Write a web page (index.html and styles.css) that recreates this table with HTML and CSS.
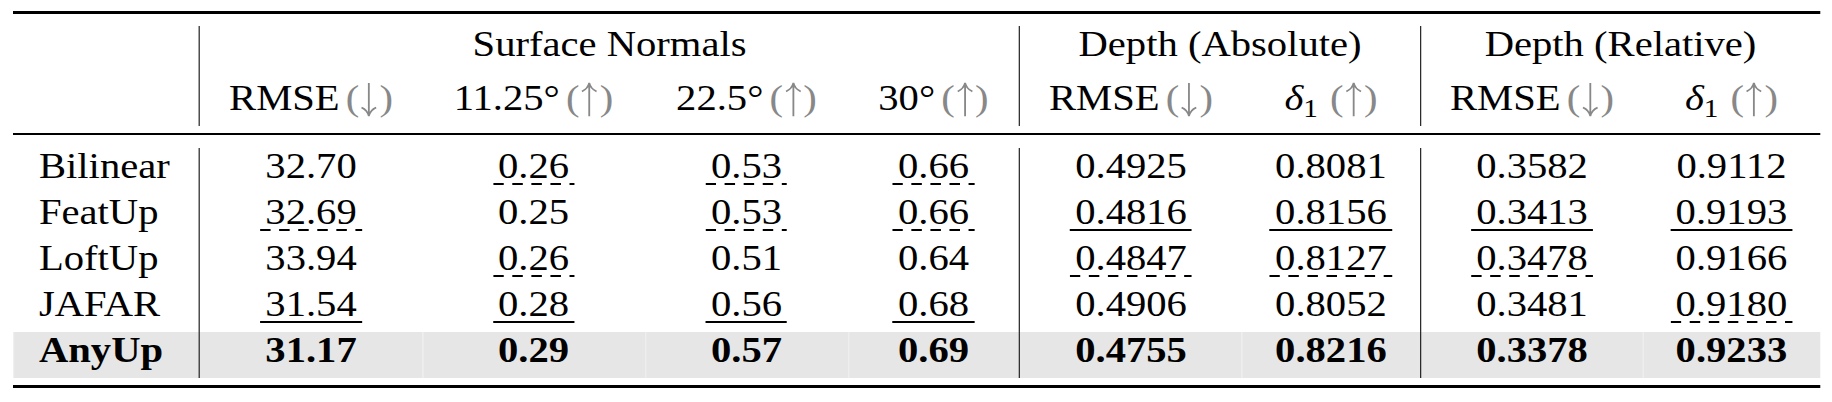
FILE: index.html
```html
<!DOCTYPE html>
<html lang="en">
<head>
    <meta charset="UTF-8">
    <meta name="viewport" content="width=device-width, initial-scale=1.0">
    <title>Upsampler comparison</title>
    <link rel="stylesheet" href="styles.css">
</head>
<body>
    <table class="results">
        <colgroup>
            <col class="c-method">
            <col class="c-wide">
            <col class="c-wide">
            <col class="c-225">
            <col class="c-30">
            <col class="c-wide">
            <col class="c-delta-a">
            <col class="c-wide">
            <col class="c-delta-r">
        </colgroup>
        <thead>
            <tr class="gap gap-top"><td colspan="9"></td></tr>
            <tr class="group">
                <td rowspan="2"></td>
                <td colspan="4" class="vl">Surface Normals</td>
                <td colspan="2" class="vl">Depth (Absolute)</td>
                <td colspan="2" class="vl">Depth (Relative)</td>
            </tr>
            <tr class="metric">
                <td class="vl">RMSE<span class="dir">(<svg class="arr" viewBox="0 0 10 20"><path d="M5 0.5V19.2M1.4 14.6Q4.3 16.1 5 19.5Q5.7 16.1 8.6 14.6"/></svg>)</span></td>
                <td>11.25°<span class="dir">(<svg class="arr" viewBox="0 0 10 20"><path d="M5 19.5V0.8M1.4 5.4Q4.3 3.9 5 0.5Q5.7 3.9 8.6 5.4"/></svg>)</span></td>
                <td>22.5°<span class="dir">(<svg class="arr" viewBox="0 0 10 20"><path d="M5 19.5V0.8M1.4 5.4Q4.3 3.9 5 0.5Q5.7 3.9 8.6 5.4"/></svg>)</span></td>
                <td>30°<span class="dir">(<svg class="arr" viewBox="0 0 10 20"><path d="M5 19.5V0.8M1.4 5.4Q4.3 3.9 5 0.5Q5.7 3.9 8.6 5.4"/></svg>)</span></td>
                <td class="vl">RMSE<span class="dir">(<svg class="arr" viewBox="0 0 10 20"><path d="M5 0.5V19.2M1.4 14.6Q4.3 16.1 5 19.5Q5.7 16.1 8.6 14.6"/></svg>)</span></td>
                <td><i>δ</i><sub>1</sub><span class="dir wide">(<svg class="arr" viewBox="0 0 10 20"><path d="M5 19.5V0.8M1.4 5.4Q4.3 3.9 5 0.5Q5.7 3.9 8.6 5.4"/></svg>)</span></td>
                <td class="vl">RMSE<span class="dir">(<svg class="arr" viewBox="0 0 10 20"><path d="M5 0.5V19.2M1.4 14.6Q4.3 16.1 5 19.5Q5.7 16.1 8.6 14.6"/></svg>)</span></td>
                <td><i>δ</i><sub>1</sub><span class="dir wide">(<svg class="arr" viewBox="0 0 10 20"><path d="M5 19.5V0.8M1.4 5.4Q4.3 3.9 5 0.5Q5.7 3.9 8.6 5.4"/></svg>)</span></td>
            </tr>
            <tr class="gap gap-mid"><td colspan="9"></td></tr>
        </thead>
        <tbody>
            <tr class="gap gap-body"><td colspan="9"></td></tr>
            <tr>
                <td class="name">Bilinear</td>
                <td class="vl">32.70</td>
                <td><span class="u3">0.26</span></td>
                <td><span class="u3">0.53</span></td>
                <td><span class="u3">0.66</span></td>
                <td class="vl">0.4925</td>
                <td>0.8081</td>
                <td class="vl">0.3582</td>
                <td>0.9112</td>
            </tr>
            <tr>
                <td class="name">FeatUp</td>
                <td class="vl"><span class="u3">32.69</span></td>
                <td>0.25</td>
                <td><span class="u3">0.53</span></td>
                <td><span class="u3">0.66</span></td>
                <td class="vl"><span class="u2">0.4816</span></td>
                <td><span class="u2">0.8156</span></td>
                <td class="vl"><span class="u2">0.3413</span></td>
                <td><span class="u2">0.9193</span></td>
            </tr>
            <tr>
                <td class="name">LoftUp</td>
                <td class="vl">33.94</td>
                <td><span class="u3">0.26</span></td>
                <td>0.51</td>
                <td>0.64</td>
                <td class="vl"><span class="u3">0.4847</span></td>
                <td><span class="u3">0.8127</span></td>
                <td class="vl"><span class="u3">0.3478</span></td>
                <td>0.9166</td>
            </tr>
            <tr>
                <td class="name">JAFAR</td>
                <td class="vl"><span class="u2">31.54</span></td>
                <td><span class="u2">0.28</span></td>
                <td><span class="u2">0.56</span></td>
                <td><span class="u2">0.68</span></td>
                <td class="vl">0.4906</td>
                <td>0.8052</td>
                <td class="vl">0.3481</td>
                <td><span class="u3">0.9180</span></td>
            </tr>
            <tr class="best">
                <td class="name">AnyUp</td>
                <td class="vl">31.17</td>
                <td>0.29</td>
                <td>0.57</td>
                <td>0.69</td>
                <td class="vl">0.4755</td>
                <td>0.8216</td>
                <td class="vl">0.3378</td>
                <td>0.9233</td>
            </tr>
            <tr class="gap gap-end"><td colspan="9"></td></tr>
        </tbody>
    </table>
</body>
</html>
```

FILE: styles.css
```css
body {
    margin: 0;
    padding: 11px 0 0 13px;
    background: #fff;
    color: #000;
    font-family: "Liberation Serif", Tinos, "Nimbus Roman", "FreeSerif", "DejaVu Serif", serif;
    font-size: 35px;
}

/* the source render is a bit wider than the font, so stretch the whole table */
.results {
    width: 1557.75px;
    table-layout: fixed;
    border-collapse: separate;
    border-spacing: 0;
    border-top: 3px solid #000;
    font-family: "Liberation Serif", Tinos, "Nimbus Roman", "FreeSerif", "DejaVu Serif", serif;
    transform: scaleX(1.16);
    transform-origin: 0 0;
}
.c-method { width: 160.34px; }
.c-wide { width: 192.24px; }
.c-225 { width: 175px; }
.c-30 { width: 147.41px; }
.c-delta-a { width: 153.45px; }
.c-delta-r { width: 152.59px; }

.results td {
    padding: 0 0 8px;
    line-height: 38px;
    text-align: center;
    white-space: nowrap;
    vertical-align: top;
}
.results .metric td {
    padding-top: 8px;
}
.results td.name {
    text-align: left;
    padding-left: 22.4px;
}
.results td.vl {
    border-left: 1px solid #1a1a1a;
}

/* booktabs style rules */
.results .gap td {
    padding: 0;
    line-height: 0;
    font-size: 0;
}
.results .gap-top td { padding-top: 12px; }
.results .gap-mid td {
    padding-top: 7px;
    border-bottom: 2px solid #000;
}
.results .gap-body td { padding-top: 13px; }
.results .gap-end td {
    padding-top: 7px;
    border-bottom: 3px solid #000;
}

.dir {
    color: #888;
    margin-left: 0.15em;
}
.dir.wide {
    margin-left: 0.3em;
}
.arr {
    width: 0.5em;
    height: 1em;
    vertical-align: -0.2em;
    fill: none;
    stroke: currentColor;
    stroke-width: 0.9;
}
.results sub {
    font-size: 0.72em;
    vertical-align: -7px;
    line-height: 0;
}

/* second best: solid, third best: dashed */
.u2,
.u3 {
    display: inline-block;
    line-height: 32px;
    padding: 0 0.13em;
}
.u2 {
    border-bottom: 2px solid #000;
}
.u3 {
    padding-bottom: 2px;
    background: linear-gradient(90deg, #000 0.25em, transparent 0.25em) 0 100% / 0.47em 2px repeat-x;
}

.best td {
    background: #e6e6e6;
    font-weight: bold;
}
.best td:not(.vl) {
    box-shadow: inset 1px 0 #efefef;
}
```
